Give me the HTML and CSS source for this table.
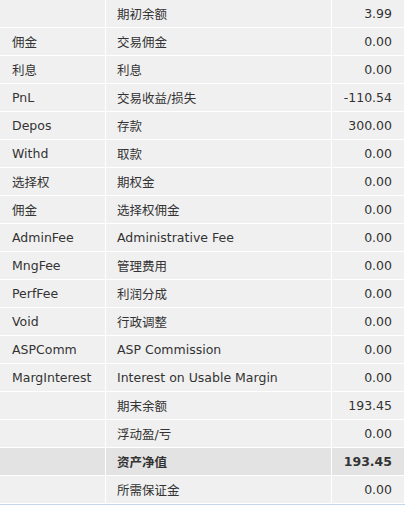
FILE: index.html
```html
<!DOCTYPE html>
<html>
<head>
<meta charset="utf-8">
<link rel="stylesheet" href="styles.css">
</head>
<body>
<table class="summary">
<colgroup><col class="c1"><col class="c2"><col class="c3"></colgroup>
<tr><td></td><td>期初余额</td><td class="num">3.99</td></tr>
<tr><td>佣金</td><td>交易佣金</td><td class="num">0.00</td></tr>
<tr><td>利息</td><td>利息</td><td class="num">0.00</td></tr>
<tr><td>PnL</td><td>交易收益/损失</td><td class="num">-110.54</td></tr>
<tr><td>Depos</td><td>存款</td><td class="num">300.00</td></tr>
<tr><td>Withd</td><td>取款</td><td class="num">0.00</td></tr>
<tr><td>选择权</td><td>期权金</td><td class="num">0.00</td></tr>
<tr><td>佣金</td><td>选择权佣金</td><td class="num">0.00</td></tr>
<tr><td>AdminFee</td><td>Administrative Fee</td><td class="num">0.00</td></tr>
<tr><td>MngFee</td><td>管理费用</td><td class="num">0.00</td></tr>
<tr><td>PerfFee</td><td>利润分成</td><td class="num">0.00</td></tr>
<tr><td>Void</td><td>行政调整</td><td class="num">0.00</td></tr>
<tr><td>ASPComm</td><td>ASP Commission</td><td class="num">0.00</td></tr>
<tr><td>MargInterest</td><td>Interest on Usable Margin</td><td class="num">0.00</td></tr>
<tr><td></td><td>期末余额</td><td class="num">193.45</td></tr>
<tr><td></td><td>浮动盈/亏</td><td class="num">0.00</td></tr>
<tr class="total"><td></td><td>资产净值</td><td class="num">193.45</td></tr>
<tr><td></td><td>所需保证金</td><td class="num">0.00</td></tr>
</table>
</body>
</html>
```
FILE: styles.css
```css
html, body {
  margin: 0;
  padding: 0;
  background: #ffffff;
}
.summary {
  width: 405px;
  border-collapse: separate;
  border-spacing: 0;
  table-layout: fixed;
  font-family: "DejaVu Sans", Verdana, "Noto Sans CJK SC", sans-serif;
  font-size: 12.5px;
  color: #333333;
  border-bottom: 2px solid #c5d5ee;
}
.c1 { width: 106px; }
.c2 { width: 226px; }
.c3 { width: 73px; }
.summary td {
  height: 28px;
  padding: 0 11px;
  background: #f0f0f0;
  border-bottom: 1px solid #ffffff;
  border-right: 1px solid #ffffff;
  white-space: nowrap;
  box-sizing: border-box;
}
.summary td:first-child {
  padding-left: 12px;
}
.summary td.num {
  text-align: right;
  padding-right: 12px;
}
.summary tr.total td {
  background: #e3e3e3;
  font-weight: bold;
}
```
